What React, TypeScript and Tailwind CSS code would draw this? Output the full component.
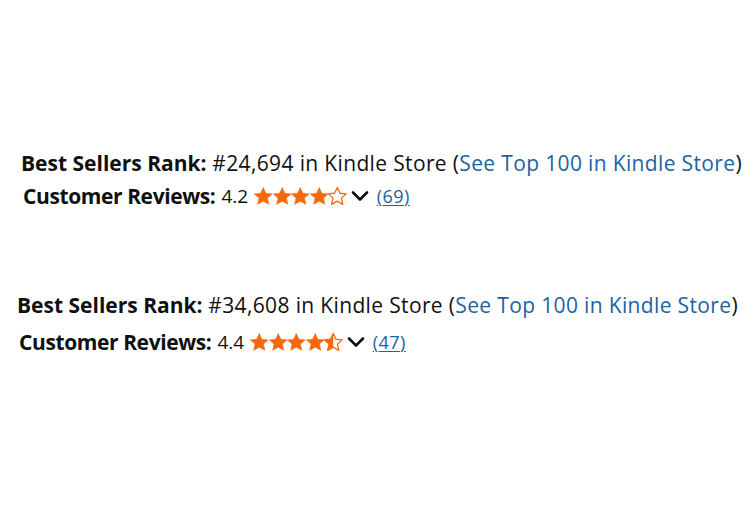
import React from "react";

const STAR = "M12 2.5l2.9 6.3 6.9.7-5.2 4.6 1.5 6.8L12 17.4l-6.1 3.5 1.5-6.8-5.2-4.6 6.9-.7z";

function Star({ kind, id }: { kind: "full" | "half" | "empty"; id: string }) {
  const c = "#F5690E";
  return (
    <svg width="18.5" height="18" viewBox="1.9 2 20.2 19.6" className="block" overflow="visible">
      {kind === "half" && (
        <defs>
          <clipPath id={id}>
            <rect x="0" y="0" width="12" height="24" />
          </clipPath>
        </defs>
      )}
      {kind === "full" && <path d={STAR} fill={c} stroke={c} strokeWidth="0.6" strokeLinejoin="round" />}
      {kind !== "full" && <path d={STAR} fill="none" stroke={c} strokeWidth="1.4" strokeLinejoin="round" />}
      {kind === "half" && <path d={STAR} fill={c} clipPath={`url(#${id})`} />}
    </svg>
  );
}

function Chevron() {
  return (
    <svg width="18" height="12" viewBox="0 0 18 12" className="block">
      <path d="M2 2.5l7 7 7-7" fill="none" stroke="#0F1111" strokeWidth="2.6" strokeLinecap="round" strokeLinejoin="round" />
    </svg>
  );
}

function Block({
  rank,
  rating,
  stars,
  count,
  pad,
  gap,
  uid,
}: {
  rank: string;
  rating: string;
  stars: ("full" | "half" | "empty")[];
  count: string;
  pad: string;
  gap: string;
  uid: string;
}) {
  return (
    <div className={`flex flex-col ${pad} ${gap} text-[#0F1111]`} style={{ fontFamily: '"Open Sans", "Noto Sans", Arial, sans-serif' }}>
      <div className="text-[21px] leading-[26px] whitespace-nowrap">
        <span className="font-bold">Best Sellers Rank:</span>
        <span className="tracking-[0.35px]"> #{rank} in Kindle Store (</span>
        <span className="text-[#2162A1] tracking-[0.35px]">See Top 100 in Kindle Store</span>)
      </div>
      <div className="flex items-center whitespace-nowrap pl-[2px]">
        <span className="font-bold text-[21px] leading-[26px] tracking-[-0.4px]">Customer Reviews:</span>
        <span className="ml-[6px] text-[19px] leading-[26px]">{rating}</span>
        <span className="ml-[6px] flex items-center">
          {stars.map((s, i) => (
            <Star key={i} kind={s} id={`${uid}-${i}`} />
          ))}
        </span>
        <span className="ml-[4px]">
          <Chevron />
        </span>
        <span className="ml-[8px] text-[18px] leading-[26px] tracking-[0.5px] text-[#2162A1] underline underline-offset-2">({count})</span>
      </div>
    </div>
  );
}

export default function App() {
  return (
    <div className="w-[754px] h-[514px] bg-white relative overflow-hidden">
      <div className="pt-[150px]">
        <Block
          rank="24,694"
          rating="4.2"
          stars={["full", "full", "full", "full", "empty"]}
          count="69"
          pad="pl-[21px]"
          gap="gap-[7px]"
          uid="a"
        />
      </div>
      <div className="pt-[83px]">
        <Block
          rank="34,608"
          rating="4.4"
          stars={["full", "full", "full", "full", "half"]}
          count="47"
          pad="pl-[17px]"
          gap="gap-[11px]"
          uid="b"
        />
      </div>
    </div>
  );
}
